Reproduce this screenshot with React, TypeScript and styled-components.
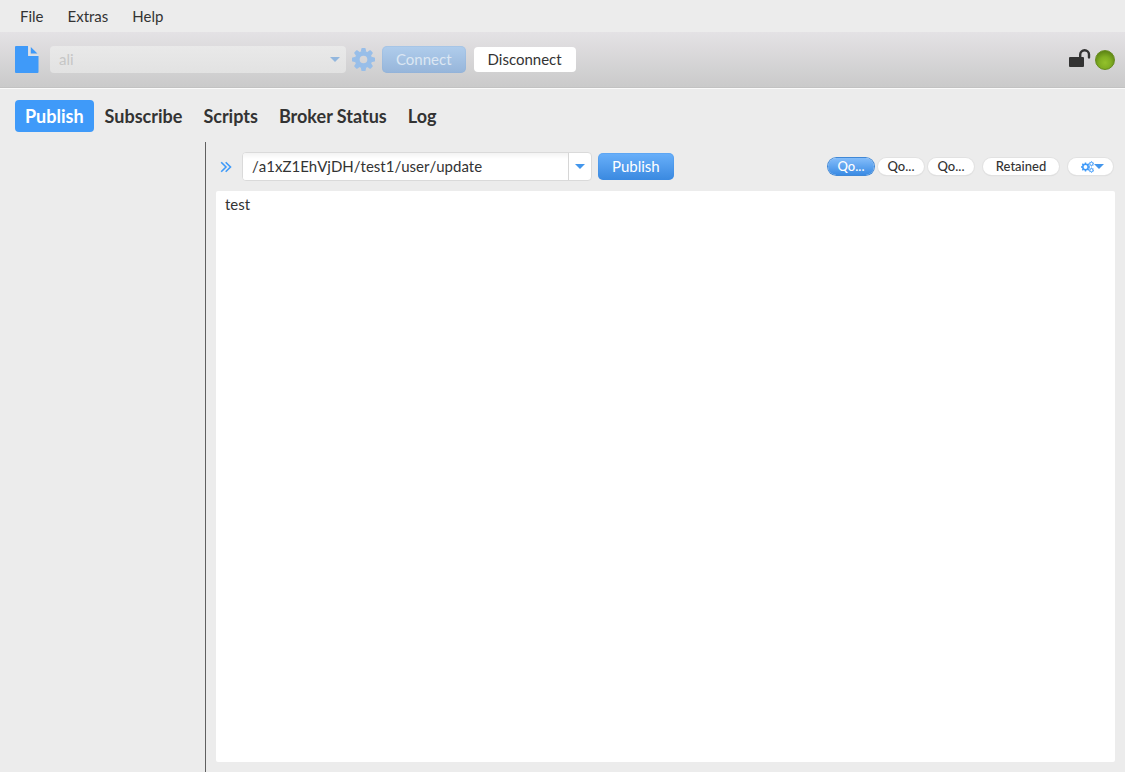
import React, { useState } from "react";
import styled, { createGlobalStyle, css } from "styled-components";

const blue = "#3f9af9";
const ink = "#333333";

const GlobalStyle = createGlobalStyle`
  *, *::before, *::after { box-sizing: border-box; }
  body { margin: 0; background: #ececec; }
  body, button, input, select, textarea {
    font-family: Lato, "Liberation Sans", sans-serif;
    font-size: 15px;
    color: ${ink};
  }
  button { border: 0; padding: 0; background: none; cursor: pointer; }
`;

const Page = styled.div`
  display: flex;
  flex-direction: column;
  min-height: 100vh;
`;

const MenuBar = styled.nav`
  display: flex;
  align-items: center;
  height: 32px;
  padding: 0 8px;
`;

const MenuItem = styled.button`
  padding: 0 12px;
  line-height: 20px;
`;

const Toolbar = styled.header`
  display: flex;
  align-items: center;
  height: 56px;
  padding: 0 10px 0 15px;
  background: linear-gradient(#e4e2e5, #cacaca);
  border-bottom: 1px solid #c2c2c2;
  box-shadow: 0 1px 0 #fafafa;
`;

const IconButton = styled.button`
  display: flex;
`;

const ProfilePicker = styled.div`
  display: flex;
  align-items: center;
  width: 296px;
  height: 27px;
  margin: 0 6px 0 11px;
  padding-right: 6px;
  border-radius: 4px;
  background: linear-gradient(#e9e9e9, #e2e2e2);
`;

const ProfileSelect = styled.select`
  flex: 1;
  height: 27px;
  padding: 0 9px 2px;
  border: 0;
  background: none;
  appearance: none;
  color: #c6c6c6;
  opacity: 1;
`;

const Button = styled.button<{ $primary?: boolean }>`
  padding: 0 14px 2px;
  height: 25px;
  border-radius: 4px;
  background: #ffffff;
  ${(p) =>
    p.$primary &&
    css`
      height: 27px;
      border-radius: 5px;
      color: #ffffff;
      background: linear-gradient(#69b0fa, #3a89e0);
      box-shadow: inset 0 0 0 1px #3d8ce240;
    `}
  &:disabled {
    color: #dce7f3;
    background: linear-gradient(#b0cdec, #96b5da);
    box-shadow: inset 0 0 0 1px #8db0d840;
  }
`;

const ToolbarButtons = styled.div`
  display: flex;
  align-items: center;
  gap: 8px;
  margin-left: 7px;
`;

const Status = styled.div`
  display: flex;
  align-items: flex-end;
  gap: 4px;
  margin-left: auto;
`;

const StatusLight = styled.span`
  width: 20px;
  height: 20px;
  border: 1px solid #668c1e;
  border-radius: 50%;
  background: radial-gradient(circle at 50% 65%, #93c12b, #80ae22 40%, #577d12 85%);
`;

const Tabs = styled.div`
  display: flex;
  gap: 1px;
  padding: 12px 15px 10px;
`;

const Tab = styled.button<{ $active: boolean }>`
  height: 32px;
  padding: 0 10px;
  border-radius: 4px;
  font-size: 18px;
  font-weight: 700;
  color: ${(p) => (p.$active ? "#ffffff" : ink)};
  background: ${(p) => (p.$active ? blue : "transparent")};
`;

const Body = styled.main`
  display: flex;
  flex: 1;
`;

const Sidebar = styled.aside`
  width: 206px;
  flex: none;
  border-right: 1px solid #606060;
`;

const Editor = styled.section`
  display: flex;
  flex-direction: column;
  flex: 1;
  min-width: 0;
  padding: 10px;
  gap: 10px;
`;

const TopicRow = styled.div`
  display: flex;
  align-items: center;
  height: 29px;
  padding-left: 4px;
`;

const TopicBox = styled.div`
  display: flex;
  width: 350px;
  height: 29px;
  margin: 0 6px 0 10px;
  border: 1px solid #dadada;
  border-radius: 4px;
  background: #ffffff;
  overflow: hidden;
`;

const TopicInput = styled.input`
  flex: 1;
  min-width: 0;
  padding: 0 9px 2px;
  border: 0;
  outline: 0;
  font-kerning: none;
  background: linear-gradient(#f3f3f3, #ffffff 6px);
`;

const TopicToggle = styled.button`
  display: flex;
  align-items: center;
  justify-content: center;
  width: 23px;
  border-left: 1px solid #d6d6d6;
`;

const Options = styled.div`
  display: flex;
  align-items: center;
  gap: 9px;
  margin-left: auto;
  padding-right: 2px;
`;

const PillGroup = styled.div`
  display: flex;
  gap: 4px;
`;

const Pill = styled.button<{ $active?: boolean; $width: number }>`
  display: flex;
  align-items: center;
  justify-content: center;
  width: ${(p) => p.$width}px;
  height: 17px;
  border-radius: 9px;
  font-size: 13px;
  font-weight: 500;
  line-height: 17px;
  background: #ffffff;
  box-shadow: 0 0 0 1px #e2e2e2, 0 1px 1px #cfcfcf;
  ${(p) =>
    p.$active &&
    css`
      color: #ffffff;
      background: linear-gradient(#84bdfa, #3a8be4);
      box-shadow: 0 0 0 1px #4088d6;
    `}
`;

const OptionsPill = styled(Pill)`
  padding-left: 4px;
`;

const Message = styled.textarea`
  flex: 1;
  width: 100%;
  padding: 3px 9px;
  border: 0;
  border-radius: 2px;
  outline: 0;
  resize: none;
  line-height: 20px;
  background: #ffffff;
`;

const teeth = [0, 45, 90, 135, 180, 225, 270, 315];

function Gear({ cx, cy, r, color }: { cx: number; cy: number; r: number; color: string }) {
  return (
    <g transform={`translate(${cx} ${cy}) scale(${r / 12})`} fill={color}>
      <circle r="6.5" fill="none" stroke={color} strokeWidth="5" />
      {teeth.map((a) => (
        <path key={a} d="M-2.8-8L-2.2-11.4Q-2.1-12-1.5-12H1.5Q2.1-12 2.2-11.4L2.8-8Z" transform={`rotate(${a})`} />
      ))}
    </g>
  );
}

function SmallGear({ cx, cy, r, color }: { cx: number; cy: number; r: number; color: string }) {
  return (
    <g transform={`translate(${cx} ${cy}) scale(${r / 12})`} fill={color}>
      <circle r="7.2" fill="none" stroke={color} strokeWidth="4.2" />
      {teeth.map((a) => (
        <path key={a} d="M-2-8V-12H2V-8Z" transform={`rotate(${a})`} />
      ))}
    </g>
  );
}

function Caret({ color = "#4396ec" }: { color?: string }) {
  return (
    <svg width="10" height="5" viewBox="0 0 10 5" aria-hidden="true">
      <path d="M0 0H10L5 5Z" fill={color} />
    </svg>
  );
}

export default function App() {
  const [tab, setTab] = useState("Publish");
  const [qos, setQos] = useState(0);
  const [retained, setRetained] = useState(false);
  const [topic, setTopic] = useState("/a1xZ1EhVjDH/test1/user/update");
  const [message, setMessage] = useState("test");

  return (
    <Page>
      <GlobalStyle />
      <MenuBar aria-label="Main menu">
        {["File", "Extras", "Help"].map((name) => (
          <MenuItem key={name}>{name}</MenuItem>
        ))}
      </MenuBar>
      <Toolbar>
        <IconButton aria-label="Connection file">
          <svg width="24" height="27" viewBox="0 0 24 27" aria-hidden="true">
            <path d="M1 0H13V10H23.5V26Q23.5 27 22.5 27H1Q0 27 0 26V1Q0 0 1 0Z" fill={blue} />
            <path d="M15.8 1L22.4 7.6H15.8Z" fill={blue} />
            <path d="M14.2 0V9.2H23.5" fill="none" stroke="#d9e6f5" />
          </svg>
        </IconButton>
        <ProfilePicker>
          <ProfileSelect aria-label="Connection profile" disabled>
            <option>ali</option>
          </ProfileSelect>
          <Caret color="#93b7de" />
        </ProfilePicker>
        <IconButton aria-label="Profile settings">
          <svg width="23" height="23" viewBox="0 0 24 24" aria-hidden="true">
            <Gear cx={12} cy={12} r={12} color="#98bee9" />
          </svg>
        </IconButton>
        <ToolbarButtons>
          <Button $primary disabled>Connect</Button>
          <Button>Disconnect</Button>
        </ToolbarButtons>
        <Status>
          <svg width="22" height="21" viewBox="0 0 22 21" role="img" aria-label="Unencrypted">
            <rect y="8" width="15" height="10" rx="1" fill={ink} />
            <path d="M11.2 9V5.6A4.4 4.4 0 0 1 20 5.6V8.4" fill="none" stroke={ink} strokeWidth="2.4" strokeLinecap="round" />
          </svg>
          <StatusLight role="img" aria-label="Connected" />
        </Status>
      </Toolbar>
      <Tabs role="tablist">
        {["Publish", "Subscribe", "Scripts", "Broker Status", "Log"].map((name) => (
          <Tab key={name} role="tab" aria-selected={tab === name} $active={tab === name} onClick={() => setTab(name)}>
            {name}
          </Tab>
        ))}
      </Tabs>
      <Body>
        <Sidebar />
        <Editor>
          <TopicRow>
            <IconButton aria-label="Show history">
              <svg width="12" height="12" viewBox="0 0 12 12" aria-hidden="true">
                <path d="M1.2 1.2L6 6L1.2 10.8M5.7 1.2L10.5 6L5.7 10.8" fill="none" stroke={blue} strokeWidth="1.6" />
              </svg>
            </IconButton>
            <TopicBox>
              <TopicInput aria-label="Topic" value={topic} onChange={(e) => setTopic(e.target.value)} />
              <TopicToggle aria-label="Recent topics">
                <Caret />
              </TopicToggle>
            </TopicBox>
            <Button $primary>Publish</Button>
            <Options>
              <PillGroup>
                {[0, 1, 2].map((level) => (
                  <Pill
                    key={level}
                    $width={46}
                    $active={qos === level}
                    aria-pressed={qos === level}
                    onClick={() => setQos(level)}
                  >
                    Qo...
                  </Pill>
                ))}
              </PillGroup>
              <Pill $width={76} $active={retained} aria-pressed={retained} onClick={() => setRetained(!retained)}>
                Retained
              </Pill>
              <OptionsPill $width={45} aria-label="Publish options">
                <svg width="13" height="12" viewBox="0 0 13 12" aria-hidden="true">
                  <SmallGear cx={4.5} cy={6} r={4.5} color={blue} />
                  <SmallGear cx={10.4} cy={2.8} r={2.6} color={blue} />
                  <SmallGear cx={10.4} cy={9.2} r={2.6} color={blue} />
                </svg>
                <Caret />
              </OptionsPill>
            </Options>
          </TopicRow>
          <Message aria-label="Message" value={message} onChange={(e) => setMessage(e.target.value)} />
        </Editor>
      </Body>
    </Page>
  );
}
